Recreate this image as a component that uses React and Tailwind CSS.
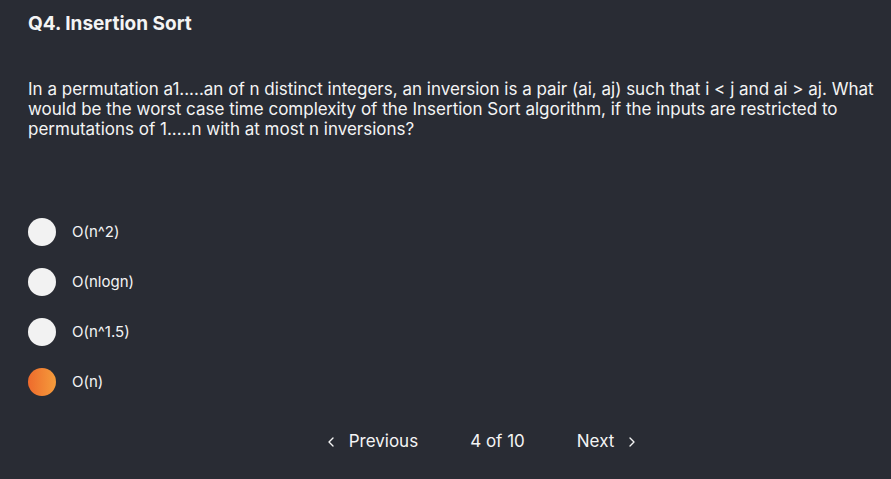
import { ChevronLeft, ChevronRight } from 'lucide-react';

const options = ['O(n^2)', 'O(nlogn)', 'O(n^1.5)', 'O(n)'];

const App = () => {
  const selected = 3;

  return (
    <div
      className="w-[891px] h-[479px] bg-[#292c34] text-[#f4f4f4] pl-7 pr-2 overflow-hidden"
      style={{ fontFamily: 'Inter, "Noto Sans", sans-serif' }}
    >
      <h1 className="pt-[13px] text-[19px] font-bold leading-[22px]">Q4. Insertion Sort</h1>

      <p className="mt-[44px] text-[17px] leading-[20px]">
        In a permutation a1.....an of n distinct integers, an inversion is a pair (ai, aj) such that i &lt; j and ai &gt; aj. What
        <br />
        would be the worst case time complexity of the Insertion Sort algorithm, if the inputs are restricted to
        <br />
        permutations of 1.....n with at most n inversions?
      </p>

      <div className="mt-[79px] flex flex-col gap-[22px]">
        {options.map((opt, i) => (
          <div key={opt} className="flex items-center gap-4">
            <span
              className={`w-7 h-7 rounded-full ${
                i === selected
                  ? 'bg-gradient-to-r from-[#ee6a2c] to-[#f49c3c]'
                  : 'bg-[#f2f2f2]'
              }`}
            />
            <span className="text-[15px]">{opt}</span>
          </div>
        ))}
      </div>

      <div className="mt-[33px] pl-[72px] pr-[20px] flex items-center justify-center text-[17px]">
        <button className="flex items-center gap-[10px]">
          <ChevronLeft size={16} strokeWidth={2} />
          Previous
        </button>
        <span className="mx-[52px]">4 of 10</span>
        <button className="flex items-center gap-[10px]">
          Next
          <ChevronRight size={16} strokeWidth={2} />
        </button>
      </div>
    </div>
  );
};

export default App;
